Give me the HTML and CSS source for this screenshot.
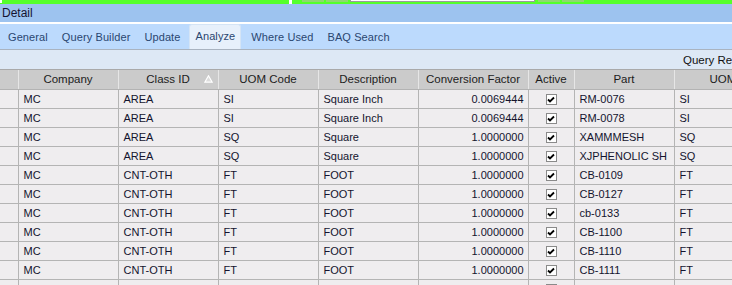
FILE: index.html
```html
<!DOCTYPE html>
<html lang="en">
<head>
    <meta charset="UTF-8">
    <title>Detail - Analyze</title>
    <link rel="stylesheet" href="styles.css">
</head>
<body>
    <div class="topbar">
        <span class="tb-white"></span>
        <span class="tb-green tb-first"></span>
        <span class="tb-gap"></span>
        <span class="tb-green tb-pad"></span>
        <span class="tb-chip"></span>
        <span class="tb-chip"></span>
        <span class="tb-box"></span>
        <span class="tb-chip"></span>
        <span class="tb-chip"></span>
        <span class="tb-green tb-rest"></span>
    </div>

    <div class="detail-bar">Detail</div>

    <div class="tabs">
        <div class="tab">General</div>
        <div class="tab">Query Builder</div>
        <div class="tab">Update</div>
        <div class="tab active">Analyze</div>
        <div class="tab">Where Used</div>
        <div class="tab">BAQ Search</div>
    </div>

    <div class="toolbar">
        <span class="toolbar-title">Query Re</span>
    </div>

    <div class="grid-wrap">
        <table class="grid">
            <colgroup>
                <col class="c-sel">
                <col class="c-std">
                <col class="c-std">
                <col class="c-std">
                <col class="c-std">
                <col class="c-conv">
                <col class="c-active">
                <col class="c-std">
                <col class="c-std">
            </colgroup>
            <thead>
                <tr>
                    <th></th>
                    <th>Company</th>
                    <th class="sorted">Class ID
                        <svg class="sort-arrow" width="9" height="8" viewBox="0 0 9 8">
                            <polygon points="4.5,0.8 8.2,7.2 0.8,7.2" fill="#dcdcdc" stroke="#fff" stroke-width="1.2"/>
                        </svg>
                    </th>
                    <th>UOM Code</th>
                    <th>Description</th>
                    <th>Conversion Factor</th>
                    <th>Active</th>
                    <th>Part</th>
                    <th class="last">UOM</th>
                </tr>
            </thead>
            <tbody id="rows"></tbody>
        </table>
    </div>

    <script>
        // rows of the query result
        const data = [
            ['MC', 'AREA', 'SI', 'Square Inch', '0.0069444', 'RM-0076', 'SI'],
            ['MC', 'AREA', 'SI', 'Square Inch', '0.0069444', 'RM-0078', 'SI'],
            ['MC', 'AREA', 'SQ', 'Square', '1.0000000', 'XAMMMESH', 'SQ'],
            ['MC', 'AREA', 'SQ', 'Square', '1.0000000', 'XJPHENOLIC SH', 'SQ'],
            ['MC', 'CNT-OTH', 'FT', 'FOOT', '1.0000000', 'CB-0109', 'FT'],
            ['MC', 'CNT-OTH', 'FT', 'FOOT', '1.0000000', 'CB-0127', 'FT'],
            ['MC', 'CNT-OTH', 'FT', 'FOOT', '1.0000000', 'cb-0133', 'FT'],
            ['MC', 'CNT-OTH', 'FT', 'FOOT', '1.0000000', 'CB-1100', 'FT'],
            ['MC', 'CNT-OTH', 'FT', 'FOOT', '1.0000000', 'CB-1110', 'FT'],
            ['MC', 'CNT-OTH', 'FT', 'FOOT', '1.0000000', 'CB-1111', 'FT']
        ];

        const check = '<span class="check"><svg width="8" height="8" viewBox="0 0 8 8">' +
            '<path d="M1 3.5 L3 5.5 L7 1.5" fill="none" stroke="#000" stroke-width="1.8"/></svg></span>';

        const tbody = document.getElementById('rows');
        tbody.innerHTML = data.map(r => `
            <tr>
                <td></td>
                <td>${r[0]}</td>
                <td>${r[1]}</td>
                <td>${r[2]}</td>
                <td>${r[3]}</td>
                <td class="num">${r[4]}</td>
                <td class="center">${check}</td>
                <td>${r[5]}</td>
                <td>${r[6]}</td>
            </tr>`).join('') +
            // next row only peeks in at the bottom edge
            '<tr><td></td><td></td><td></td><td></td><td></td><td></td><td class="center">' +
            check + '</td><td></td><td></td></tr>';
    </script>
</body>
</html>
```

FILE: styles.css
```css
* {
    box-sizing: border-box;
    margin: 0;
    padding: 0;
}

body {
    width: 732px;
    height: 285px;
    overflow: hidden;
    background: #efedef;
    font-family: 'Liberation Sans', Arial, sans-serif;
    font-size: 11px;
}

/* green strip at the very top */
.topbar {
    display: flex;
    height: 4px;
    background: #55ff2b;
}

.topbar span {
    display: block;
    height: 4px;
}

.tb-white {
    width: 2px;
    background: #fff;
    height: 3px !important;
}

.tb-first {
    width: 287px;
}

.tb-gap {
    width: 3px;
    background: #fff;
}

.tb-pad {
    width: 10px;
}

.tb-chip {
    width: 22px;
    margin-right: 2px;
    background: #8fd86f;
    height: 2px !important;
}

.tb-box {
    width: 185px;
    margin-right: 3px;
    background: #fff;
    border: 1px solid #9a9a9a;
    border-top: none;
    height: 2px !important;
}

.tb-green {
    background: #55ff2b;
}

.tb-rest {
    flex: 1;
}

.detail-bar {
    height: 20px;
    background: #9dc3ef;
    color: #141432;
    font-size: 12px;
    line-height: 18px;
    padding-left: 2px;
    border-bottom: 2px solid #fff;
}

.tabs {
    display: flex;
    align-items: flex-end;
    height: 26px;
    background: #bcdafd;
    border-bottom: 1px solid #a9b3c0;
    padding-left: 1px;
}

.tab {
    height: 24px;
    line-height: 25px;
    padding: 0 7px;
    color: #2a4670;
    font-size: 11px;
    letter-spacing: 0.1px;
}

.tab.active {
    height: 25px;
    line-height: 23px;
    margin: 0 3px 0 2px;
    padding: 0 5px;
    background: #e7f0fb;
    border: 1px solid #d4e4f6;
    border-bottom: none;
    border-radius: 3px 3px 0 0;
}

.toolbar {
    height: 20px;
    background: #dde8f5;
    border-bottom: 1px solid #a9a9a9;
    position: relative;
}

.toolbar-title {
    position: absolute;
    left: 683px;
    top: 4px;
    font-size: 11.5px;
    color: #111;
    white-space: nowrap;
}

.grid-wrap {
    width: 732px;
    overflow: hidden;
}

.grid {
    width: 774px;
    table-layout: fixed;
    border-collapse: collapse;
}

.c-sel { width: 18px; }
.c-std { width: 100px; }
.c-conv { width: 110px; }
.c-active { width: 46px; }

.grid th {
    height: 19px;
    background: #cbcbcb;
    color: #1c1c1c;
    font-weight: normal;
    font-size: 11.5px;
    border-left: 1px solid #e6e6e6;
    border-bottom: 1px solid #b3b3b3;
    text-align: center;
    white-space: nowrap;
    overflow: hidden;
    position: relative;
}

.grid th:first-child {
    border-left: none;
}

.grid th.last {
    text-align: left;
    padding-left: 35px;
}

.sort-arrow {
    position: absolute;
    right: 5px;
    top: 5px;
}

.grid td {
    height: 19px;
    padding: 0 5px;
    color: #14142e;
    border: 1px solid #b4b4b4;
    white-space: nowrap;
    overflow: hidden;
    background: #efedef;
}

.grid td:first-child {
    border-left: none;
}

.grid td.num {
    text-align: right;
    padding-right: 4px;
}

.grid td.center {
    text-align: center;
    padding: 0;
}

.check {
    display: inline-flex;
    align-items: center;
    justify-content: center;
    width: 11px;
    height: 11px;
    margin-top: 2px;
    background: #fff;
    border: 1px solid #8a8a8a;
    vertical-align: middle;
}
```
